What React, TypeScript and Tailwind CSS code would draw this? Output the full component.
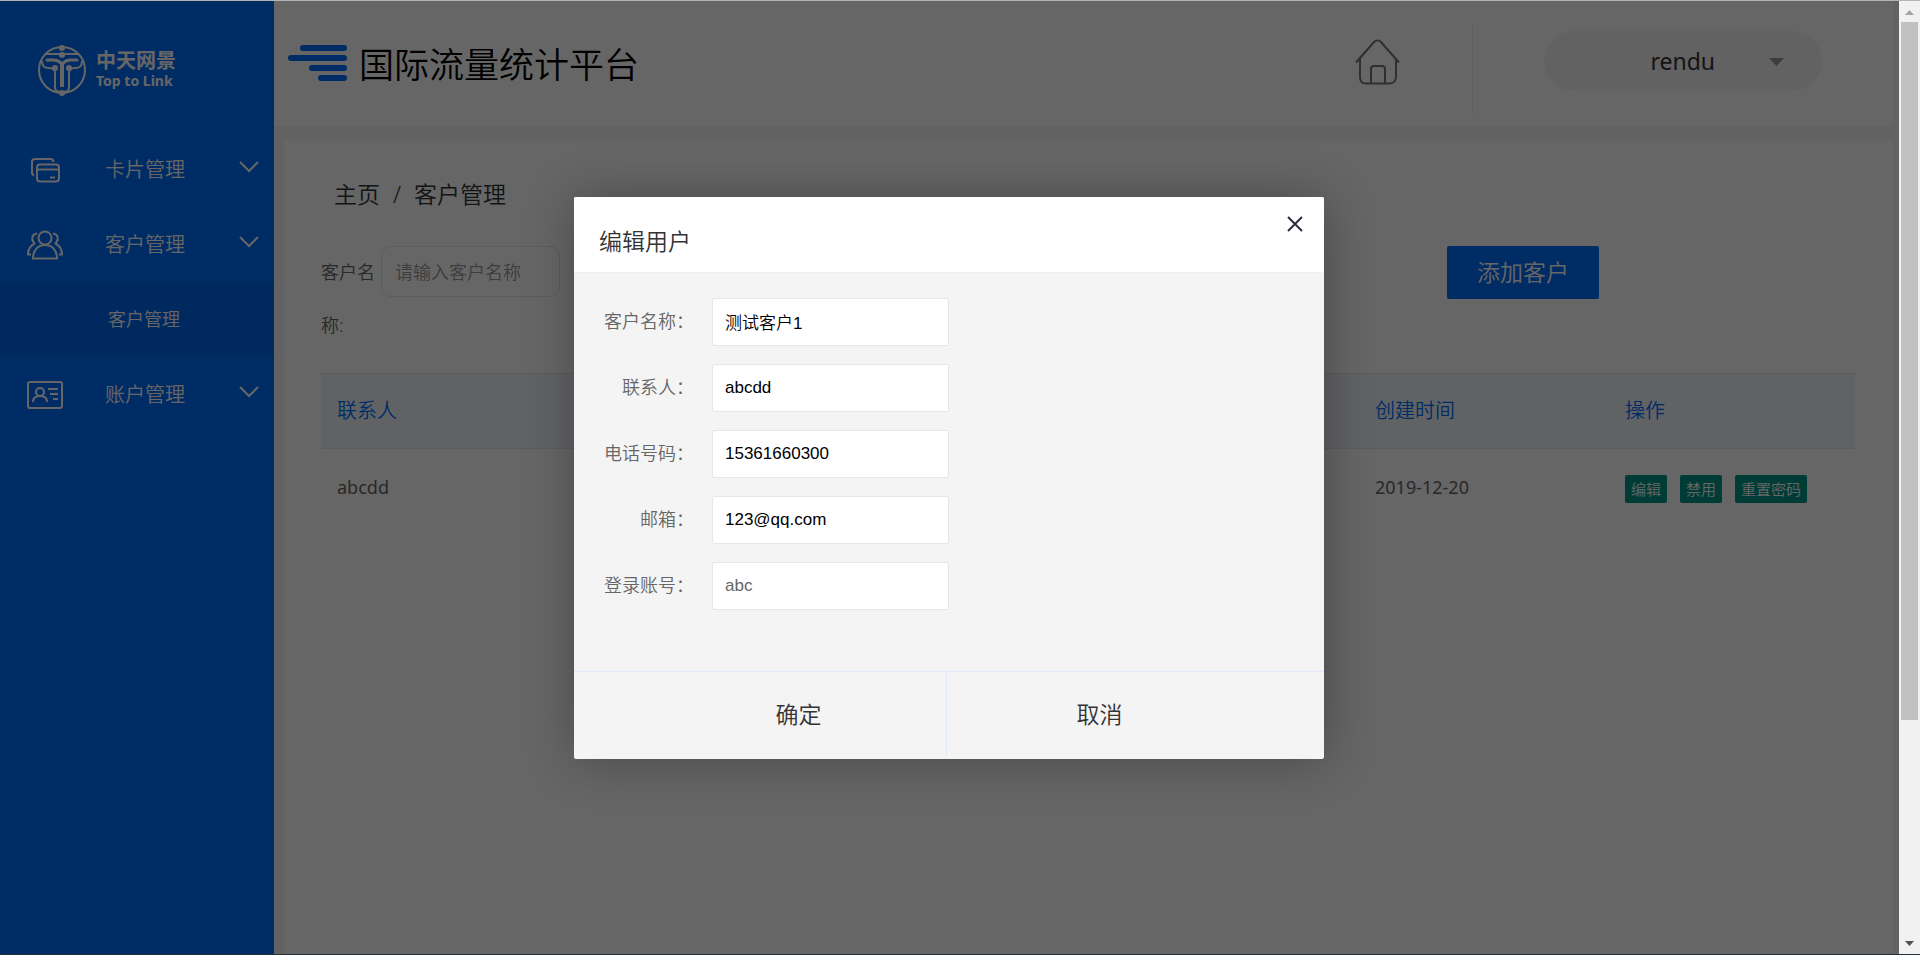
import React from 'react';

const Logo = () => (
  <svg width="50" height="52" viewBox="0 0 50 52" fill="none" stroke="currentColor" strokeWidth="2">
    <circle cx="25" cy="26" r="23" />
    <path d="M9 10H41" />
    <path d="M5 17C5 23 8 24 12 24C15 24 18 25 18 29V44C18 47 21 48 25 48C29 48 32 47 32 44V29C32 25 35 24 38 24C42 24 45 23 45 17" />
    <path d="M10 16H17C21 16 23 18 25 20C27 18 29 16 33 16H40" strokeWidth="3" strokeLinecap="round" />
    <path d="M25 19V43" strokeWidth="4" />
    <circle cx="25" cy="4" r="2" fill="currentColor" />
    <circle cx="25" cy="11" r="2" fill="currentColor" />
    <circle cx="18" cy="24" r="2" fill="currentColor" />
    <circle cx="32" cy="24" r="2" fill="currentColor" />
    <circle cx="25" cy="49" r="2" fill="currentColor" />
  </svg>
);

const CardIcon = () => (
  <svg width="30" height="26" viewBox="0 0 30 26" fill="none" stroke="currentColor" strokeWidth="2">
    <path d="M4 18.500C2.500 18 2 17 2 15.500V5C2 3 3 2 5 2H20C22 2 23.500 3 23.500 5" />
    <rect x="7" y="7.500" width="22" height="17" rx="3" />
    <path d="M7 12.500H29M20 20.500H25" />
  </svg>
);

const UsersIcon = () => (
  <svg width="36" height="30" viewBox="0 0 36 30" fill="none" stroke="currentColor" strokeWidth="2">
    <circle cx="18" cy="8" r="6.500" />
    <path d="M6 28.500C6 20 11 15 18 15C25 15 30 20 30 28.500Z" />
    <path d="M10 3.500C5 4 4 9 6.500 12C7 13 8 13.500 7 14C3 16 1 19 1 24.500H4" />
    <path d="M26 3.500C31 4 32 9 29.500 12C29 13 28 13.500 29 14C33 16 35 19 35 24.500H32" />
  </svg>
);

const AccountIcon = () => (
  <svg width="36" height="28" viewBox="0 0 36 28" fill="none" stroke="currentColor" strokeWidth="2">
    <rect x="1" y="1" width="34" height="26" rx="2" />
    <circle cx="13" cy="11" r="4" />
    <path d="M6 21C6 17 9 15 13 15C17 15 20 17 20 21M21 8H31M23 13H31M26 18H31" />
  </svg>
);

const ChevronIcon = () => (
  <svg width="20" height="12" viewBox="0 0 20 12" fill="none" stroke="currentColor" strokeWidth="2">
    <path d="M1 1L10 10L19 1" />
  </svg>
);

const MenuItem = ({ icon, label }: { icon: React.ReactNode; label: string }) => (
  <button type="button" className="flex h-[75px] w-full items-center text-left">
    <span className="flex w-[90px] justify-center">{icon}</span>
    <span className="flex-1 pt-px pl-[15px] text-[20px]">{label}</span>
    <span className="pr-[15px] pb-[6px]">
      <ChevronIcon />
    </span>
  </button>
);

const Sidebar = () => (
  <aside className="w-[274px] shrink-0 bg-[#006eff] text-white">
    <div className="flex h-[131px] items-center gap-[9px] pt-[6px] pl-[37px]">
      <Logo />
      <div className="flex flex-col font-bold">
        <p className="text-[20px] leading-[23px]">中天网景</p>
        <p className="font-['Noto_Sans'] text-[14px] leading-[18px]">Top to Link</p>
      </div>
    </div>
    <nav>
      <MenuItem icon={<CardIcon />} label="卡片管理" />
      <MenuItem icon={<UsersIcon />} label="客户管理" />
      <a href="#customers" className="flex h-[75px] items-center bg-[#0068f0] pl-[108px] text-[18px]">
        客户管理
      </a>
      <MenuItem icon={<AccountIcon />} label="账户管理" />
    </nav>
  </aside>
);

const Header = () => (
  <header className="flex h-[125px] items-center bg-white">
    <svg width="59" height="36" viewBox="0 0 59 36" className="mb-px ml-[14px] text-[#006eff]" stroke="currentColor" strokeWidth="6" strokeLinecap="round">
      <path d="M15 3H56M3 13H56M24 23H56M33 33H56" />
    </svg>
    <h1 className="flex-1 pt-[3px] pl-3 text-[35px] text-black">国际流量统计平台</h1>
    <a href="#home" aria-label="主页" className="pr-[72px] pb-1 text-[#777]">
      <svg width="45" height="46" viewBox="0 0 45 46" fill="none" stroke="currentColor" strokeWidth="2">
        <path d="M1 23.500L19 3C21 1 24 1 26 3L44 23.500" />
        <path d="M5 19V38C5 42 7 44.500 11 44.500H34C38 44.500 41 42 41 38V19" />
        <path d="M16 44V30C16 28 17 27 19 27H27C29 27 30 28 30 30V44" />
      </svg>
    </a>
    <div className="mb-[11px] flex h-[90px] w-[421px] items-start justify-center self-end border-l border-[#eee] pt-[6px]">
      <button type="button" className="flex h-[60px] w-[278px] items-center justify-end gap-[54px] rounded-full bg-[#f5f5f5] pt-px pr-[38px] font-['Noto_Sans'] text-[23px] font-normal text-[#333]">
        rendu
        <svg width="15" height="8" viewBox="0 0 15 8" fill="#999">
          <path d="M0 0H15L7.500 8Z" />
        </svg>
      </button>
    </div>
  </header>
);

const ActionButton = ({ label }: { label: string }) => (
  <button type="button" className="h-7 rounded-[2px] bg-[#009688] px-[6px] text-[15px] leading-7 text-white">
    {label}
  </button>
);

const CustomerTable = () => (
  <table className="mt-[21px] w-full table-fixed text-left">
    <thead>
      <tr className="h-[75px] border-y border-[#e6e6e6] bg-[#f2f6fb] text-[20px] text-[#006eff]">
        <th className="w-[250px] pl-4 font-[350]">联系人</th>
        <th></th>
        <th className="w-[250px] pl-4 font-[350]">创建时间</th>
        <th className="w-[246px] pl-4 font-[350]">操作</th>
      </tr>
    </thead>
    <tbody>
      <tr className="h-[77px] text-[18px] text-[#666]">
        <td className="pl-4 font-normal">abcdd</td>
        <td></td>
        <td className="pl-4 font-normal">2019-12-20</td>
        <td className="pt-[3px] pl-4">
          <div className="flex gap-[13px]">
            <ActionButton label="编辑" />
            <ActionButton label="禁用" />
            <ActionButton label="重置密码" />
          </div>
        </td>
      </tr>
    </tbody>
  </table>
);

const Field = ({ id, label, value, disabled }: { id: string; label: string; value: string; disabled?: boolean }) => (
  <div className="flex items-center">
    <label htmlFor={id} className="w-[120px] text-right text-[18px] text-[#666]">
      {label}
    </label>
    <input
      id={id}
      type="text"
      defaultValue={value}
      disabled={disabled}
      className="ml-[18px] h-12 w-[237px] rounded-[2px] border border-[#e6e6e6] bg-white px-3 font-['Liberation_Sans','Noto_Sans_CJK_SC',sans-serif] text-[17px] text-black disabled:text-[#666]"
    />
  </div>
);

const EditDialog = () => (
  <div role="dialog" aria-labelledby="dialog-title" className="w-[750px] rounded-[2px] bg-[#f4f4f4] shadow-[1px_1px_50px_rgba(0,0,0,0.3)]">
    <div className="flex h-[76px] items-start justify-between rounded-t-[2px] border-b border-[#eee] bg-white pr-[21px] pl-[25px]">
      <h2 id="dialog-title" className="pt-[28px] text-[23px] leading-[32px] text-[#333]">编辑用户</h2>
      <button type="button" aria-label="关闭" className="mt-[19px] text-[#2e2d3c]">
        <svg width="16" height="16" viewBox="0 0 16 16" fill="none" stroke="currentColor" strokeWidth="2">
          <path d="M1 1L15 15M15 1L1 15" />
        </svg>
      </button>
    </div>
    <form className="flex flex-col gap-[18px] pt-[25px] pb-[61px]">
      <Field id="name" label="客户名称：" value="测试客户1" />
      <Field id="contact" label="联系人：" value="abcdd" />
      <Field id="phone" label="电话号码：" value="15361660300" />
      <Field id="email" label="邮箱：" value="123@qq.com" />
      <Field id="account" label="登录账号：" value="abc" disabled />
    </form>
    <div className="flex h-[88px] border-t border-[#e0e9fa] pt-px pb-[3px] text-[23px] text-[#333]">
      <button type="button" className="w-[373px] border-r border-[#e0e9fa] pl-[77px]">确定</button>
      <button type="button" className="flex-1 pr-[72px]">取消</button>
    </div>
  </div>
);

const Scrollbar = () => (
  <div className="flex w-[21px] shrink-0 flex-col items-center bg-[#f1f1f1]">
    <svg width="17" height="21" viewBox="0 0 17 21" fill="#a3a3a3">
      <path d="M4 14H13L8.500 9Z" />
    </svg>
    <div className="w-[17px] flex-[698] bg-[#c1c1c1]"></div>
    <div className="flex-[213]"></div>
    <svg width="17" height="21" viewBox="0 0 17 21" fill="#505050">
      <path d="M4 8H13L8.500 13Z" />
    </svg>
  </div>
);

const App = () => {
  return (
    <div className="flex h-screen overflow-hidden border-t border-b border-t-[#b4b4b4] border-b-[#24303c] font-['Noto_Sans','Noto_Sans_CJK_SC',sans-serif] font-[350]">
      <div className="relative flex min-w-0 flex-1">
        <Sidebar />
        <div className="flex min-w-0 flex-1 flex-col bg-[#f5f5f5] pr-[6px]">
          <Header />
          <main className="mt-[15px] ml-[10px] flex-1 bg-white pr-[38px] pl-[37px]">
            <p className="flex gap-[13px] pt-[37px] pl-[13px] text-[23px] leading-[32px] text-[#333]">
              <a href="#home">主页</a>
              <span>/</span>
              <span>客户管理</span>
            </p>
            <div className="mt-[36px] flex items-start">
              <label htmlFor="search" className="w-[60px] pr-[5px] text-[18px] leading-[53px] text-[#666]">
                客户名称:
              </label>
              <input
                id="search"
                type="text"
                placeholder="请输入客户名称"
                className="h-[51px] w-[179px] rounded-[10px] border border-[#e6e6e6] px-[13px] text-[18px] placeholder:text-[#999]"
              />
              <button type="button" className="mr-[256px] ml-auto h-[53px] w-[152px] rounded-[2px] bg-[#006eff] text-[23px] text-white">
                添加客户
              </button>
            </div>
            <CustomerTable />
          </main>
        </div>
        {/* Edit user popup */}
        <div className="absolute inset-0 flex items-center justify-center bg-black/60 pr-px">
          <EditDialog />
        </div>
      </div>
      <Scrollbar />
    </div>
  );
};

export default App;
